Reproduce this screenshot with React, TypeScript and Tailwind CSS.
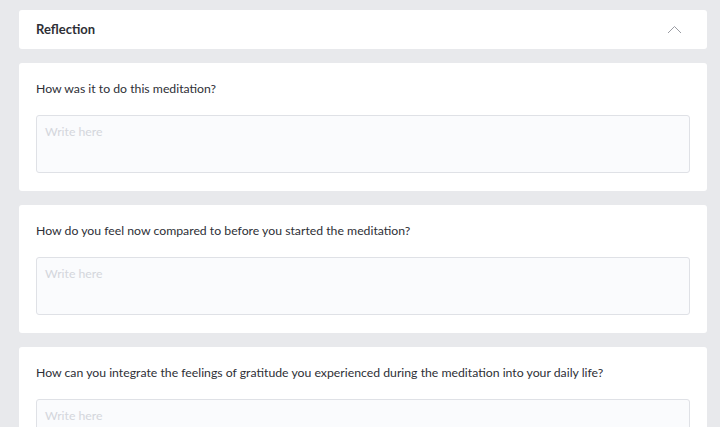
import { useState } from 'react';

const questions = [
  'How was it to do this meditation?',
  'How do you feel now compared to before you started the meditation?',
  'How can you integrate the feelings of gratitude you experienced during the meditation into your daily life?',
];

export default function App() {
  const [answers, setAnswers] = useState<string[]>(questions.map(() => ''));

  return (
    <div className="min-h-screen bg-[#e8e9ec] pl-[19px] pr-[13px] pt-[10px] pb-4 font-['Lato','Noto_Sans',sans-serif] text-[#2e2f36]">
      <div className="flex h-[39px] items-center justify-between rounded-[3px] bg-white pl-[17px] pr-[25px]">
        <h2 className="text-[13px] font-bold">Reflection</h2>
        <svg className="h-[9px] w-[15px] text-[#9a9ca3]" viewBox="0 0 15 9" fill="none" stroke="currentColor">
          <path d="M1 8l6.5-6.5L14 8" strokeWidth={1} />
        </svg>
      </div>

      <div className="mt-[14px] flex flex-col gap-[14px]">
        {questions.map((q, i) => (
          <div key={i} className="rounded-[3px] bg-white px-[17px] pt-[17px] pb-[18px]">
            <p className="text-[12.25px] leading-[18px]">{q}</p>
            <textarea
              value={answers[i]}
              onChange={(e) => {
                const next = [...answers];
                next[i] = e.target.value;
                setAnswers(next);
              }}
              placeholder="Write here"
              className="mt-[17px] block h-[58px] w-full resize-none rounded-[3px] border border-[#dfe1e6] bg-[#fafbfd] px-2 py-[8px] text-[12.25px] leading-[16px] outline-none placeholder:text-[#d4d6dc]"
            />
          </div>
        ))}
      </div>
    </div>
  );
}
